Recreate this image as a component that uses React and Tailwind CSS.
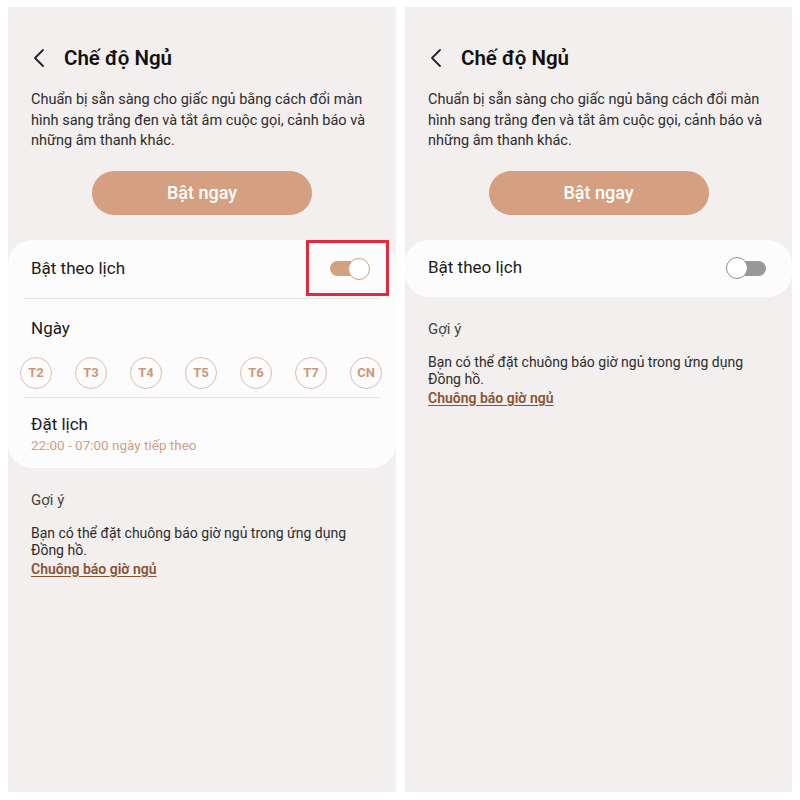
import React from 'react';

const DAYS = ['T2', 'T3', 'T4', 'T5', 'T6', 'T7', 'CN'];

const Toggle = ({ on }) =>
  on ? (
    <div className="relative w-[40px] h-[22px] flex items-center">
      <div className="w-[36px] h-[15px] rounded-full bg-[#d3a080]" />
      <div className="absolute right-0 top-0 w-[22px] h-[22px] rounded-full bg-white border-[1.5px] border-[#d3a080]" />
    </div>
  ) : (
    <div className="relative w-[40px] h-[22px] flex items-center justify-end">
      <div className="w-[34px] h-[15px] rounded-full bg-[#999999]" />
      <div className="absolute left-0 top-0 w-[22px] h-[22px] rounded-full bg-white border-[1.5px] border-[#8f8f8f]" />
    </div>
  );

const Header = () => (
  <>
    <div className="flex items-center h-[30px] mt-[36px]">
      <svg
        width="12"
        height="20"
        viewBox="0 0 12 20"
        className="ml-[25px]"
        fill="none"
        stroke="#222"
        strokeWidth="1.8"
        strokeLinecap="round"
        strokeLinejoin="round"
      >
        <path d="M10 2 L2 10 L10 18" />
      </svg>
      <h1 className="ml-[19px] text-[20.5px] font-semibold text-[#111]">
        Chế độ Ngủ
      </h1>
    </div>
    <p className="mt-[17px] ml-[23px] text-[14.5px] leading-[20.5px] text-[#2c2c2c]">
      Chuẩn bị sẵn sàng cho giấc ngủ bằng cách đổi màn
      <br />
      hình sang trắng đen và tắt âm cuộc gọi, cảnh báo và
      <br />
      những âm thanh khác.
    </p>
    <div className="flex justify-center mt-[19px]">
      <button className="w-[220px] h-[44px] rounded-full bg-[#d4a081] text-white text-[18px] font-medium">
        Bật ngay
      </button>
    </div>
  </>
);

const Hint = () => (
  <div className="ml-[23px] mt-[22px]">
    <p className="text-[15px] leading-[20px] text-[#444]">Gợi ý</p>
    <p className="mt-[15px] text-[14px] leading-[17px] text-[#2c2c2c]">
      Bạn có thể đặt chuông báo giờ ngủ trong ứng dụng
      <br />
      Đồng hồ.
    </p>
    <a className="block mt-[1px] text-[14px] leading-[19px] font-semibold text-[#8a5434] underline underline-offset-2">
      Chuông báo giờ ngủ
    </a>
  </div>
);

export default function App() {
  return (
    <div
      className="w-[800px] h-[800px] bg-white flex gap-[9px] pl-[8px] pt-[7px]"
      style={{ fontFamily: 'Roboto, "Noto Sans", sans-serif' }}
    >
      {/* left: schedule on */}
      <div className="w-[388px] h-[785px] bg-[#f3efee]">
        <Header />
        <div className="relative mt-[25px] bg-[#fdfcfc] rounded-[24px]">
          <div className="h-[58px] flex items-center justify-between pl-[23px] pr-[26px]">
            <span className="text-[17px] text-[#1a1a1a]">Bật theo lịch</span>
            <Toggle on />
          </div>
          <div className="mx-[16px] h-px bg-[#e6e2e1]" />
          <div className="pl-[23px] pt-[17px] text-[17px] leading-[24px] text-[#1a1a1a]">
            Ngày
          </div>
          <div className="flex gap-[23px] pl-[12px] mt-[17px]">
            {DAYS.map((d) => (
              <div
                key={d}
                className="w-[32px] h-[32px] rounded-full border-[1.5px] border-[#dcbfae] flex items-center justify-center text-[13px] font-bold text-[#c9987b]"
              >
                {d}
              </div>
            ))}
          </div>
          <div className="mx-[16px] mt-[8px] h-px bg-[#e6e2e1]" />
          <div className="pl-[23px] pt-[14px] pb-[14px]">
            <p className="text-[17px] leading-[24px] text-[#1a1a1a]">Đặt lịch</p>
            <p className="text-[13.5px] leading-[18px] text-[#cf9f82]">
              22:00 - 07:00 ngày tiếp theo
            </p>
          </div>
          <div className="absolute top-0 right-[7px] w-[83px] h-[56px] border-[3px] border-[#e42a3c]" />
        </div>
        <Hint />
      </div>

      {/* right: schedule off */}
      <div className="w-[387px] h-[785px] bg-[#f3efee]">
        <Header />
        <div className="mt-[25px] bg-[#fdfcfc] rounded-[24px] h-[57px] flex items-center justify-between pl-[23px] pr-[26px]">
          <span className="text-[17px] text-[#1a1a1a]">Bật theo lịch</span>
          <Toggle on={false} />
        </div>
        <Hint />
      </div>
    </div>
  );
}
